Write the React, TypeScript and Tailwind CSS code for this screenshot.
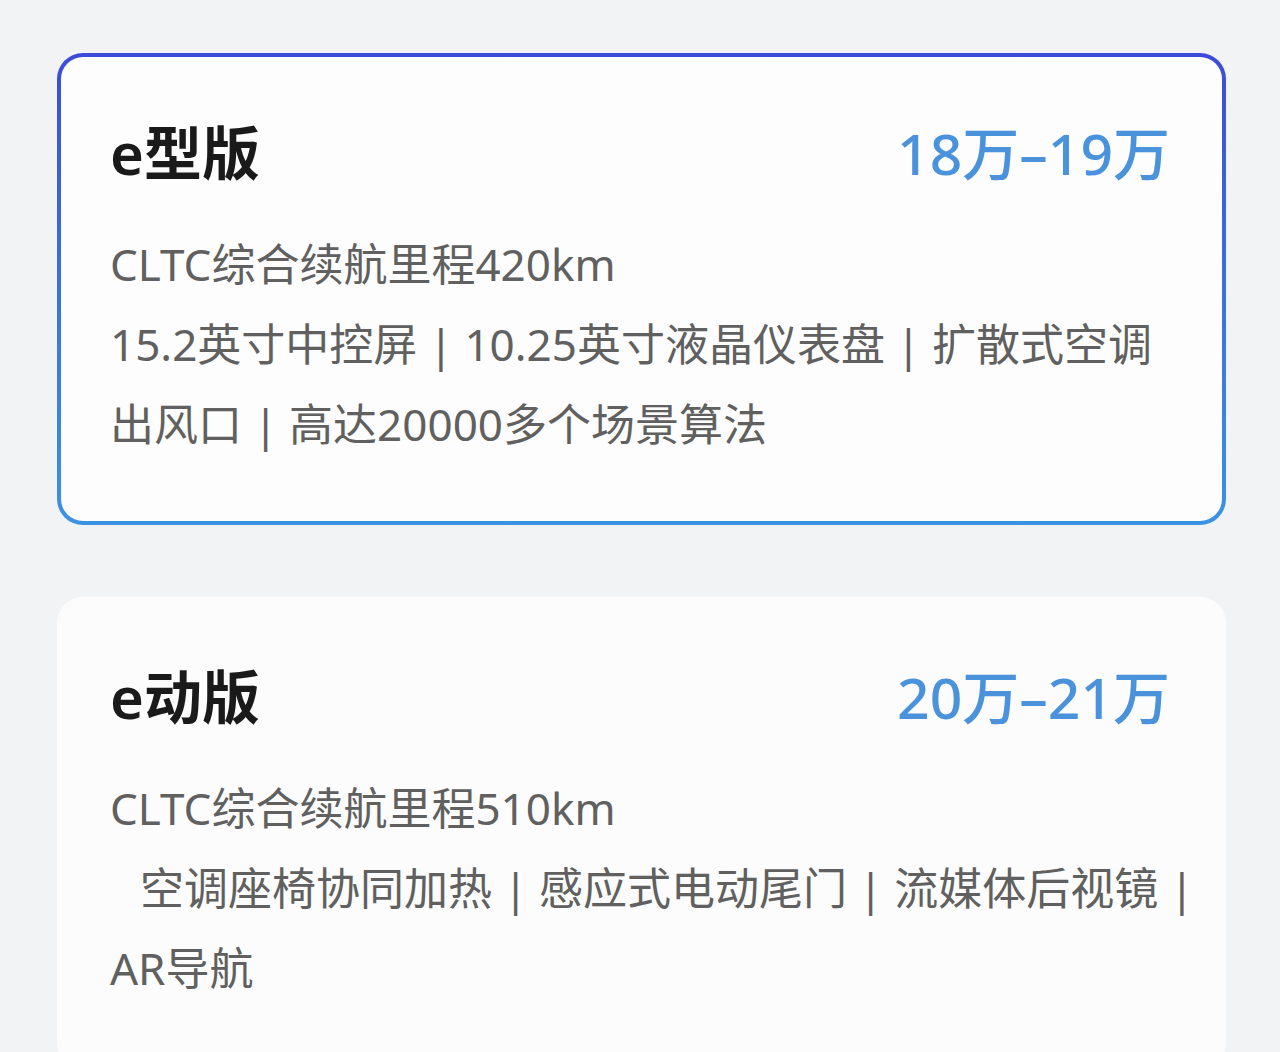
type Trim = {
  name: string;
  price: string;
  range: string;
  lines: string[];
  indentSecond?: boolean;
  active?: boolean;
};

const trims: Trim[] = [
  {
    name: "e型版",
    price: "18万–19万",
    range: "CLTC综合续航里程420km",
    lines: ["15.2英寸中控屏 | 10.25英寸液晶仪表盘 | 扩散式空调", "出风口 | 高达20000多个场景算法"],
    active: true,
  },
  {
    name: "e动版",
    price: "20万–21万",
    range: "CLTC综合续航里程510km",
    lines: ["空调座椅协同加热 | 感应式电动尾门 | 流媒体后视镜 |", "AR导航"],
    indentSecond: true,
  },
];

const TrimBody = ({ trim }: { trim: Trim }) => (
  <div className="pl-[49px] pr-[52px] pt-[67px] pb-[57px]">
    <div className="flex items-center justify-between leading-none">
      <h2 className="text-[58px] font-semibold text-[#1a1a1a]">{trim.name}</h2>
      <span className="text-[57px] font-medium text-[#4a93dc]">{trim.price}</span>
    </div>
    <div className="mt-[42px] text-[44px] leading-[80px] text-[#606060] whitespace-nowrap">
      <p>{trim.range}</p>
      {trim.lines.map((line, i) => (
        <p key={i} className={trim.indentSecond && i === 0 ? "pl-[30px]" : ""}>
          {line}
        </p>
      ))}
    </div>
  </div>
);

const TrimCard = ({ trim }: { trim: Trim }) => {
  if (trim.active) {
    return (
      <div className="rounded-[26px] bg-gradient-to-b from-[#3c4bd8] to-[#3b93e2] p-[4px]">
        <div className="rounded-[22px] bg-[#fdfdfd]">
          <TrimBody trim={trim} />
        </div>
      </div>
    );
  }
  return (
    <div className="rounded-[26px] bg-[#fcfcfc] p-[4px]">
      <TrimBody trim={trim} />
    </div>
  );
};

export default function App() {
  return (
    <div
      className="h-[1052px] overflow-hidden bg-[#f2f3f5] pl-[57px] pr-[54px] pt-[53px]"
      style={{ fontFamily: '"Noto Sans", "Noto Sans CJK SC", sans-serif' }}
    >
      <div className="flex flex-col gap-[72px]">
        {trims.map((t) => (
          <TrimCard key={t.name} trim={t} />
        ))}
      </div>
    </div>
  );
}
